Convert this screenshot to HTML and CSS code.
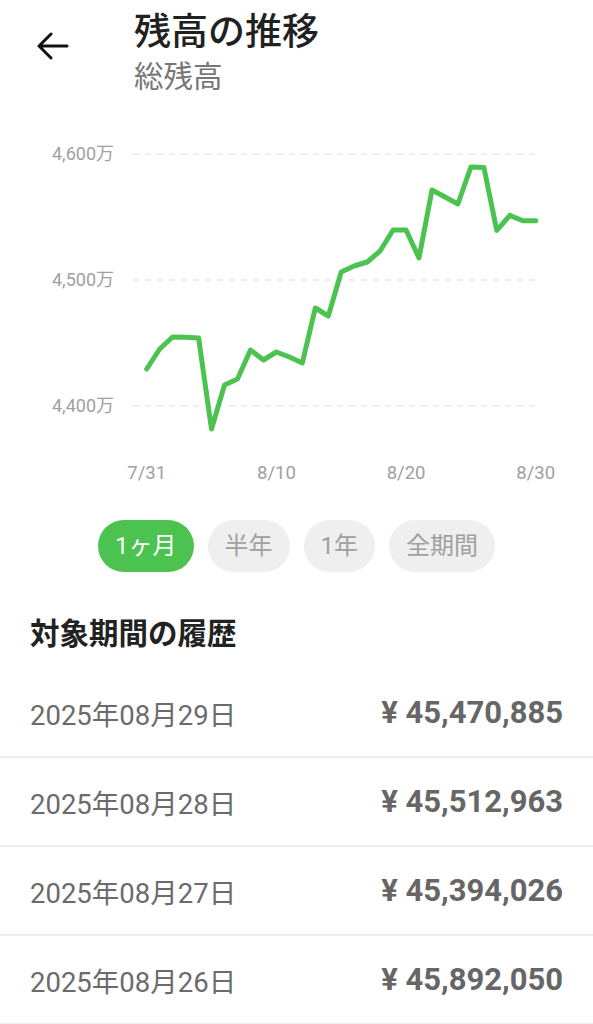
FILE: index.html
```html
<!DOCTYPE html>
<html lang="ja">
<head>
<meta charset="utf-8">
<title>残高の推移</title>
<link rel="stylesheet" href="styles.css">
</head>
<body>
<div class="page">
  <header class="header">
    <div class="back">
      <svg width="32" height="30" viewBox="0 0 32 30" aria-hidden="true">
        <path d="M2 14 H30 M14 2 L2 14 L14 26" fill="none" stroke="#111" stroke-width="3" stroke-linecap="round" stroke-linejoin="miter"/>
      </svg>
    </div>
    <div class="titles">
      <div class="title">残高の推移</div>
      <div class="subtitle">総残高</div>
    </div>
  </header>

  <svg class="chart" width="593" height="390" viewBox="0 130 593 390">
    <g class="grid">
      <line x1="133" y1="154" x2="536" y2="154"/>
      <line x1="133" y1="280" x2="536" y2="280"/>
      <line x1="133" y1="406" x2="536" y2="406"/>
    </g>
    <g class="ylabels">
      <text x="114" y="160">4,600万</text>
      <text x="114" y="286">4,500万</text>
      <text x="114" y="412">4,400万</text>
    </g>
    <g class="xlabels">
      <text x="146.7" y="479">7/31</text>
      <text x="276.4" y="479">8/10</text>
      <text x="406.1" y="479">8/20</text>
      <text x="535.7" y="479">8/30</text>
    </g>
    <polyline class="line" points="146.7,369 159.7,349 172.6,337 185.6,337.3 198.6,338 211.5,429 224.5,385 237.5,379 250.5,350 263.4,360 276.4,352 289.4,357 302.3,363 315.3,308 328.3,316 341.2,272 354.2,266 367.2,262 380.1,251 393.1,230 406.1,230 419,258 432,190 445,197 457.9,204 470.9,167 483.9,167.5 496.8,230.4 509.8,215.4 522.8,220.7 535.7,220.7"/>
  </svg>

  <div class="periods">
    <span class="pill active">1ヶ月</span>
    <span class="pill">半年</span>
    <span class="pill">1年</span>
    <span class="pill">全期間</span>
  </div>

  <h2 class="section-title">対象期間の履歴</h2>

  <ul class="history">
    <li class="row"><span class="date">2025年08月29日</span><span class="amount">¥ 45,470,885</span></li>
    <li class="row"><span class="date">2025年08月28日</span><span class="amount">¥ 45,512,963</span></li>
    <li class="row"><span class="date">2025年08月27日</span><span class="amount">¥ 45,394,026</span></li>
    <li class="row"><span class="date">2025年08月26日</span><span class="amount">¥ 45,892,050</span></li>
  </ul>
</div>
</body>
</html>
```

FILE: styles.css
```css
* { box-sizing: border-box; }

html, body {
  margin: 0;
  padding: 0;
  background: #ffffff;
}

body {
  font-family: Roboto, "Noto Sans CJK JP", "Noto Sans", sans-serif;
  color: #222222;
}

.page {
  width: 593px;
  overflow: hidden;
}

.header {
  display: flex;
  align-items: flex-start;
  height: 130px;
  padding-top: 11px;
}

.back {
  margin: 21px 0 0 37px;
  width: 32px;
  height: 30px;
}

.back svg { display: block; }

.titles {
  margin-left: 65px;
}

.title {
  font-size: 37px;
  line-height: 44px;
  font-weight: 500;
  color: #212121;
}

.subtitle {
  margin-top: 4px;
  font-size: 29.5px;
  line-height: 36px;
  color: #777777;
}

.chart {
  display: block;
}

.grid line {
  stroke: #dddddd;
  stroke-width: 1.2;
  stroke-dasharray: 6 6;
}

.ylabels text {
  font-family: Roboto, "Noto Sans CJK JP", sans-serif;
  font-size: 18px;
  fill: #a0a0a0;
  text-anchor: end;
}

.xlabels text {
  font-family: Roboto, "Noto Sans CJK JP", sans-serif;
  font-size: 18.5px;
  fill: #a0a0a0;
  text-anchor: middle;
}

.line {
  fill: none;
  stroke: #4cc350;
  stroke-width: 5;
  stroke-linejoin: round;
  stroke-linecap: round;
}

.periods {
  display: flex;
  justify-content: center;
  gap: 14px;
}

.pill {
  height: 52px;
  padding: 0 17px;
  border-radius: 26px;
  background: #efefef;
  color: #a0a0a0;
  font-size: 24px;
  line-height: 52px;
  white-space: nowrap;
}

.pill.active {
  background: #4cc350;
  color: #ffffff;
}

.section-title {
  margin: 42px 0 15px 0;
  padding-left: 30px;
  font-size: 29.5px;
  line-height: 40px;
  font-weight: 700;
  color: #222222;
}

.history {
  list-style: none;
  margin: 0;
  padding: 0;
}

.row {
  display: flex;
  justify-content: space-between;
  align-items: center;
  height: 89px;
  padding: 0 30px;
  border-bottom: 2px solid #eeeeee;
}

.date {
  font-size: 27.5px;
  color: #6b6b6b;
}

.amount {
  font-size: 31px;
  font-weight: 700;
  color: #666666;
}
```
